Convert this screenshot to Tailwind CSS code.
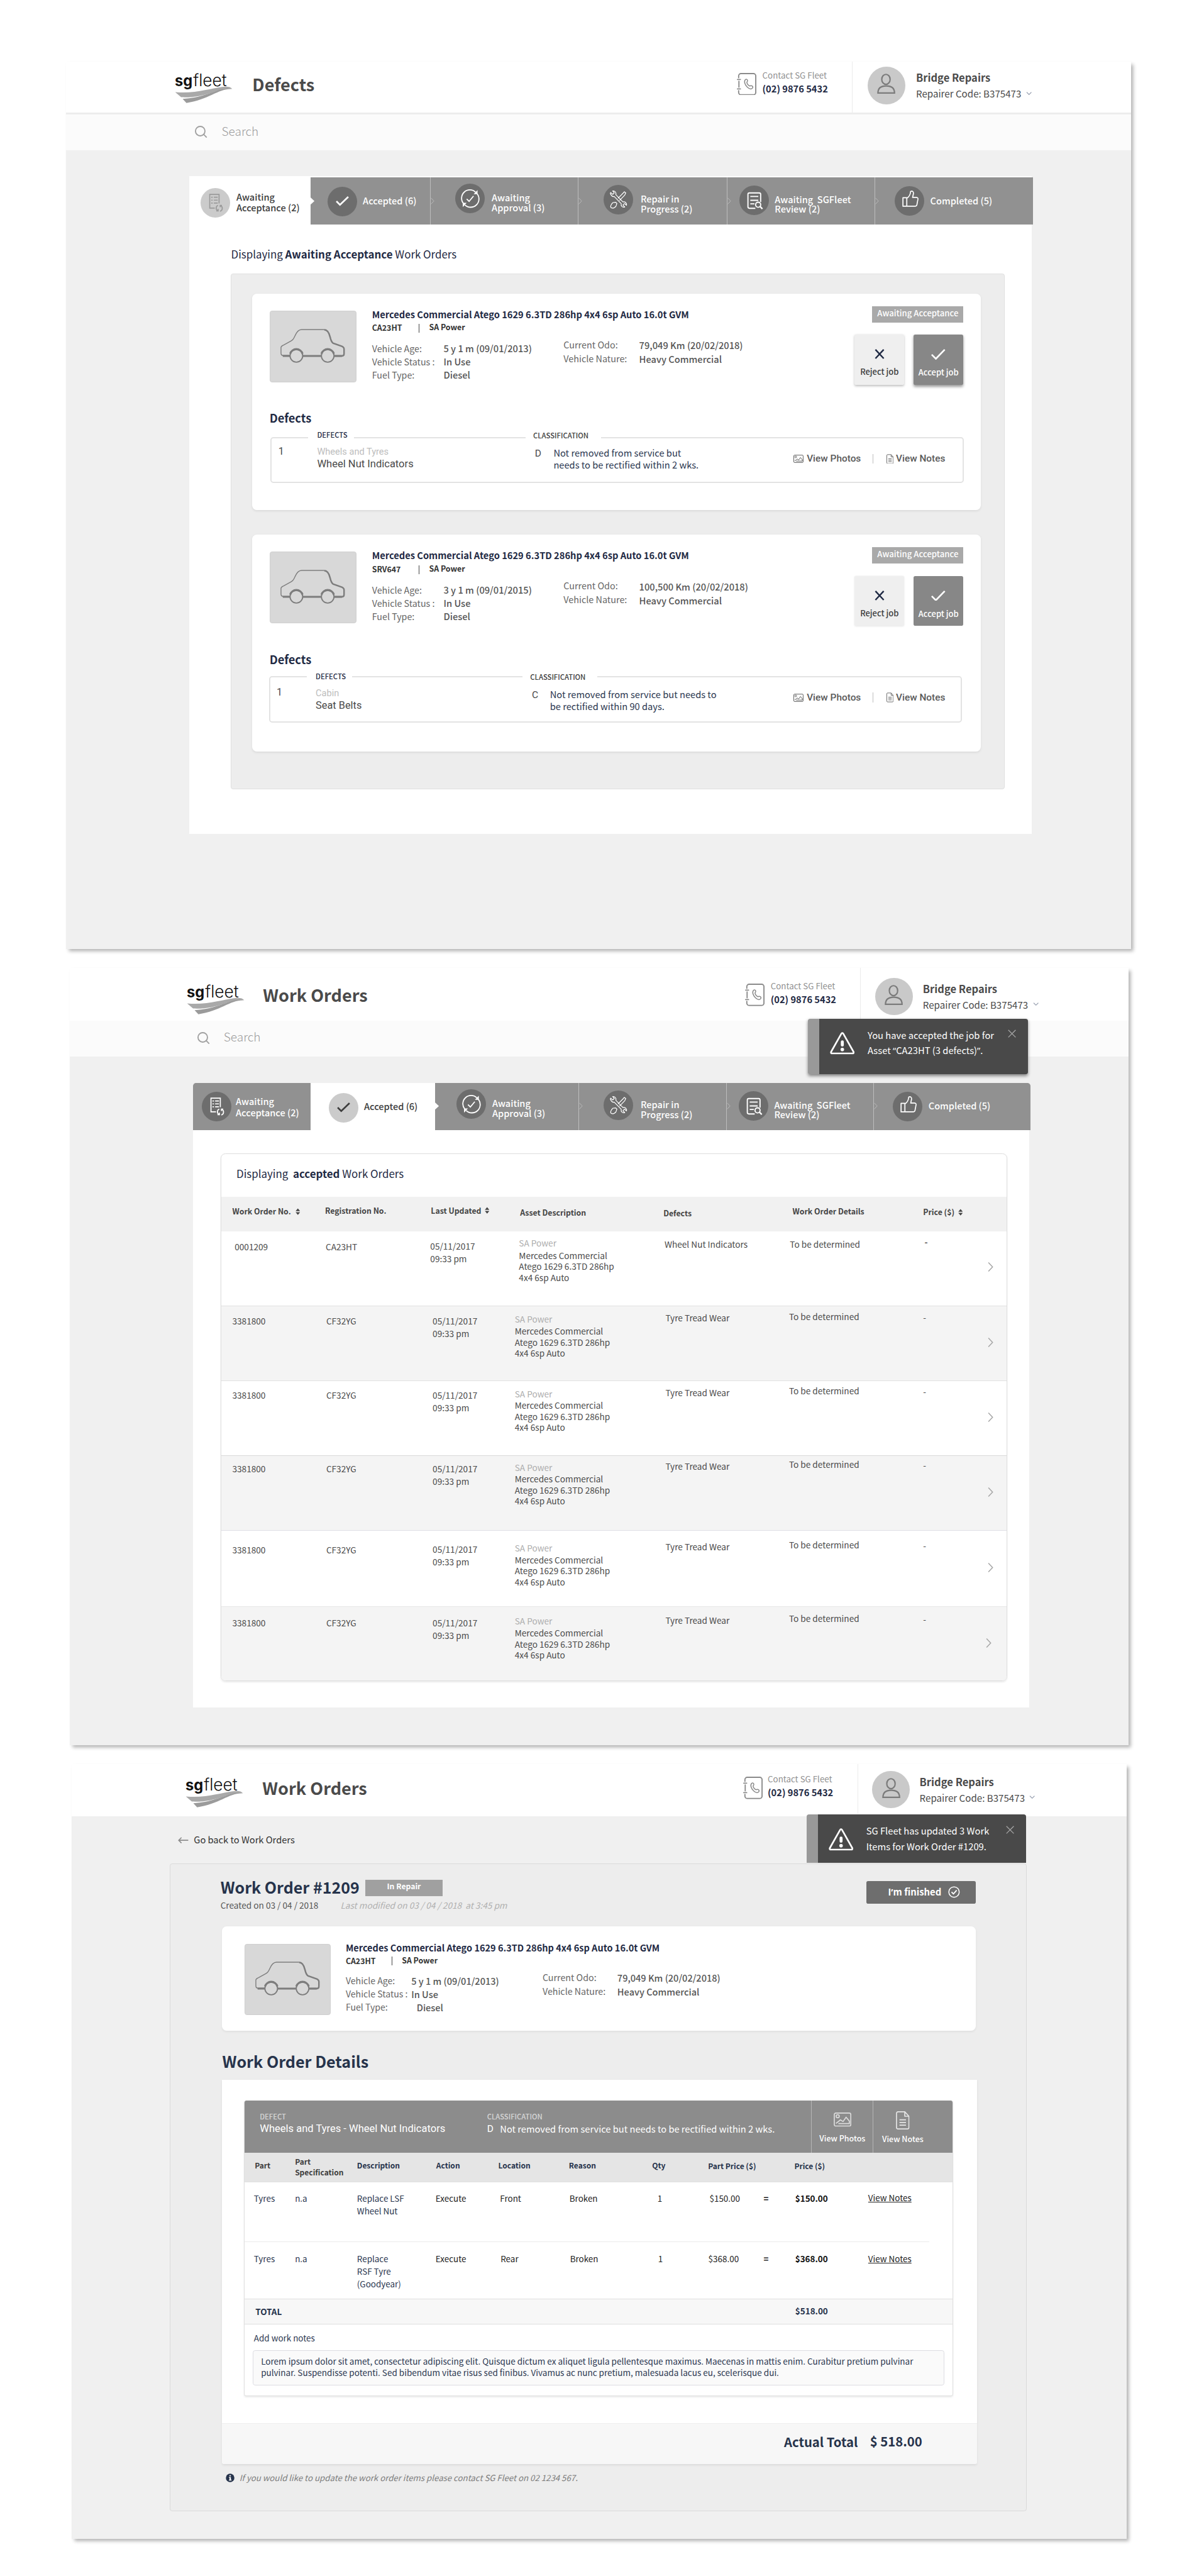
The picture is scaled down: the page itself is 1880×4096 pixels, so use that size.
<!DOCTYPE html>
<html lang="en">
<head>
<meta charset="utf-8">
<title>SG Fleet – Repairer Portal</title>
<script src="https://cdn.jsdelivr.net/npm/@tailwindcss/browser@4"></script>
</head>
<body class="bg-white w-[1880px] h-[4096px] overflow-hidden">

<!-- Shared icons -->
<svg class="hidden" xmlns="http://www.w3.org/2000/svg">
  <symbol id="i-logo-wave" viewBox="0 0 98 50">
    <path fill="#a9a9a9" d="M.7 31.3C34 34.5 60 25 80 22.6c8-1 14-.8 17.3 3.4C75 22 55 42 10.7 40Z"/>
    <path fill="#9b9b9b" d="M13.3 42.7C44 42 66 29 84 25.6c6-.8 10-.4 13.3.6C74 25 58 44 19.7 49.8Z"/>
  </symbol>
  <symbol id="i-phone" viewBox="0 0 34 38">
    <g fill="none" stroke="#8a8a8a" stroke-width="2" stroke-linecap="round">
      <path d="M3 8V5a4 4 0 0 1 4-4h21a4 4 0 0 1 4 4v28a4 4 0 0 1-4 4H7a4 4 0 0 1-4-4v-3"/>
      <path d="M1 11h5M1 27h5M3.500 14v10"/>
      <path stroke-width="1.600" d="M14.500 11.200c1.500-1.300 3-.4 3.500 1.300.5 1.800-.8 2.600-1.100 3.400.2 2.600 2.700 5.600 4.800 6.200 1.200-.3 2.500-1.300 4-.2 1.600 1.200 1.800 2.500.5 3.900-2.200 2.200-5.700.9-8.600-1.900-3.900-3.900-6.200-9.700-3.100-12.700Z"/>
    </g>
  </symbol>
  <symbol id="i-person" viewBox="0 0 32 36">
    <g fill="none" stroke="#7b7b7b" stroke-width="2.400"><ellipse cx="15.500" cy="10" rx="7.300" ry="8.700"/><path d="M1.500 33.800c0-9 5-12.300 14.500-12.300s14.500 3.300 14.500 12.300Z"/></g>
  </symbol>
  <symbol id="i-search" viewBox="0 0 21 21">
    <g fill="none" stroke="#a0a0a0" stroke-width="2"><circle cx="9" cy="9" r="8"/><path d="M14.800 14.500 20 19.800"/></g>
  </symbol>
  <symbol id="i-down" viewBox="0 0 10 6"><path fill="none" stroke="#8a93a5" stroke-width="1.200" d="m1 .6 4 4 4-4"/></symbol>
  <symbol id="i-doc-refresh" viewBox="0 0 50 50">
    <g fill="none" stroke="currentColor" stroke-width="1.800">
      <path d="M24 34h-8.500V10.800h15.800V26"/>
      <path d="M18 15.600h2.500M22.500 15.600h6.500M18 20.500h2.500M22.500 20.500h6.500M18 25.500h2.500M22.500 25.500h6.500"/>
      <path d="M29.500 29.300a5 5 0 0 0-.5 9M33 39.200a5 5 0 0 0 1-9.300M26.500 38.700h3.200v-3.200M36.200 29.300h-3v3.200"/>
    </g>
  </symbol>
  <symbol id="i-check" viewBox="0 0 50 50"><path fill="none" stroke="currentColor" stroke-width="2.800" d="m15 24.500 6 6L35 17"/></symbol>
  <symbol id="i-approve" viewBox="0 0 50 50">
    <g fill="none" stroke="currentColor" stroke-width="1.900">
      <path d="M14 33.500a14 14 0 0 1 20.500-19M37 17a14 14 0 0 1-20.500 19"/>
      <path d="m19.500 26 4 4L31 21"/>
    </g>
    <path fill="currentColor" d="M37.800 11v6.800h-6.600ZM12.800 39.500v-7h6.600Z"/>
  </symbol>
  <symbol id="i-tools" viewBox="0 0 50 50">
    <g fill="none" stroke="currentColor" stroke-width="1.300" stroke-linejoin="round">
      <path d="M12.500 16.500c-1.500-2-.8-3.200-.4-3.600l3.400 3 2.600-2.400-2.700-3.200c3-.6 6.500 2 5.400 6.300l12 12.300c3.300-1 6.800 1.700 6 5.600l-3.300-3-2.700 2.400 3 3.600c-3.500 1-7-1.700-5.900-5.700l-12-12.200c-2 .6-4 .1-5.400-3.100Z"/>
      <path d="m35 11.500 2.500 2-1.600 3.600-9 9.400M24.400 22.700l8.500-8.600L35 11.500M20.600 29.400l1.900 2-1.500 4.600c-1.500 2-4 3.300-6.200 3.300-2.500-.3-3.400-2-2.500-4.300.8-2 2.200-4 3.700-5.200Z"/>
    </g>
  </symbol>
  <symbol id="i-doc-search" viewBox="0 0 50 50">
    <g fill="none" stroke="currentColor" stroke-width="2">
      <path d="M27 38.500H17a2.500 2.500 0 0 1-2.500-2.500V15a2.500 2.500 0 0 1 2.500-2.500h16.500A2.500 2.500 0 0 1 36 15v13"/>
      <path d="M18.500 18.500H32M18.500 25H32M18.500 31h7"/><circle cx="31.800" cy="32.500" r="4.300"/><path stroke-width="2.400" d="m35 35.500 4 4"/>
    </g>
  </symbol>
  <symbol id="i-thumb" viewBox="0 0 50 50">
    <g fill="none" stroke="currentColor" stroke-width="1.800" stroke-linejoin="round">
      <path d="M14 19.500h6.500v14.500H14ZM20.500 20.500c4-2.500 6-6 6.500-11.500 2.500-1.700 5.200.2 4.800 3.500l-1.500 6.500h6.500c2 .2 2.800 1.500 2.600 3l-1.800 9.500c-.4 1.700-1.500 2.500-3.200 2.500H20.500"/>
    </g>
  </symbol>
  <symbol id="i-sep" viewBox="0 0 8 12"><path fill="none" stroke="#bdbdbd" stroke-width="1" d="m.5.8 5 5.200-5 5.200"/></symbol>
  <symbol id="i-arrow" viewBox="0 0 8 12"><path fill="#fff" d="M0 0l6.500 6L0 12Z"/></symbol>
  <symbol id="i-car" viewBox="0 0 110 58">
    <g fill="none" stroke="#7d7d7d">
      <path stroke-width="1.500" d="M15.500 45H4.500Q1 45 1 41V31.500Q1 29 5 27.500l13-7.200q4-2 6.500-8.300Q29 1 36 1h38"/>
      <path stroke-width="2.600" d="M74 1.400q7 0 10 12 2 8.500 5 10.600l15 5.500q3.500 1.500 3.700 4.500V42q0 3.700-4 3.700h-13"/>
      <path stroke-width="3.200" d="M38 45.700h31M4 45.700h12M91 45.700h13"/>
      <circle stroke-width="2" cx="27" cy="45.500" r="10.700"/><circle stroke-width="2" cx="80" cy="45.500" r="10.700"/>
      <path stroke-width="3.400" d="M16.500 42a11 11 0 0 1 21 0M69.500 42a11 11 0 0 1 21 0"/>
    </g>
  </symbol>
  <symbol id="i-photo" viewBox="0 0 30 24">
    <g fill="none" stroke="currentColor" stroke-width="1.800" stroke-linejoin="round">
      <rect x="1" y="1" width="28" height="22" rx="2.500"/><circle cx="6.800" cy="6.300" r="2.600"/>
      <path d="m3.800 18.500 7.600-6 4.500 2.800L21 8l5.500 6.500v4.300H8"/>
    </g>
  </symbol>
  <symbol id="i-note" viewBox="0 0 23 31">
    <g fill="none" stroke="currentColor" stroke-width="1.800" stroke-linejoin="round">
      <path d="M1 3.500A2.500 2.500 0 0 1 3.500 1H15l7 7.500v19a2.500 2.500 0 0 1-2.500 2.500h-16A2.500 2.500 0 0 1 1 27.500Z"/><path d="M15 1v7.500h7M6 14.500h11M6 19h11M6 23.500h11"/>
    </g>
  </symbol>
  <symbol id="i-sort" viewBox="0 0 8 12"><path fill="#444" d="M4 .5 7.800 5H.2ZM4 11.500.2 7h7.600Z"/></symbol>
  <symbol id="i-right" viewBox="0 0 10 18"><path fill="none" stroke="#a6a6a6" stroke-width="1.600" d="m1.200 1.500 7 7.500-7 7.500"/></symbol>
  <symbol id="i-warn" viewBox="0 0 42 38">
    <path fill="none" stroke="#fff" stroke-width="2.800" stroke-linejoin="round" d="M19.500 2.600q1.500-2 3 0L40 33.500q1 2.700-2 2.700H4q-3 0-2-2.700Z"/>
    <path stroke="#fff" stroke-width="5" stroke-linecap="round" d="M21 16.500v5.500"/><circle fill="#fff" cx="21" cy="29.500" r="3"/>
  </symbol>
  <symbol id="i-x" viewBox="0 0 14 14"><path fill="none" stroke="currentColor" stroke-width="1.300" d="m.8.8 12.400 12.400M13.200.8.8 13.200"/></symbol>
</svg>

<div class="[zoom:0.94] w-[2000px] h-[4358px] pt-[104px] overflow-hidden font-['Noto_Sans_CJK_SC','Open_Sans',sans-serif] text-[15px] leading-5 text-[#4a4a4a] whitespace-nowrap">

<!-- ============ Screen 1: Defects ============ -->
<section class="ml-[112px] w-[1802px] h-[1501px] bg-[#f0f0f0] shadow-[4px_4px_6px_rgba(0,0,0,0.3)]">
  <header class="h-[90px] bg-white border-b-4 border-[#ededed] flex items-start pl-[184px]">
    <svg class="mt-[20px] w-[98px] h-[50px] overflow-visible"><use href="#i-logo-wave"/><text x="0" y="21.500" textLength="30" lengthAdjust="spacingAndGlyphs" font-family="Inter" font-weight="700" font-size="26" fill="#111">sg</text><text x="31" y="21.500" textLength="57" lengthAdjust="spacingAndGlyphs" font-family="Inter" font-weight="300" font-size="28" fill="#111">fleet</text></svg>
    <h1 class="ml-[33px] mt-[18.500px] text-[28.800px] leading-10 font-bold text-[#4a4a4a]">Defects</h1>
    <div class="ml-auto w-[667px] flex items-start">
      <div class="w-[196px] h-[86px] border-r border-[#ebebeb] flex items-start">
        <svg class="mt-[19px] w-[34px] h-[38px]"><use href="#i-phone"/></svg>
        <div class="ml-[9px] mt-[14px]"><div class="text-[14.200px] text-[#8f8f8f]">Contact SG Fleet</div><div class="mt-[2px] text-[15.600px] font-bold text-[#1f2a44]">(02) 9876 5432</div></div>
      </div>
      <div class="ml-[25px] mt-[9px] size-[64px] rounded-full bg-[#c9c9c9] flex justify-center pt-[12px]"><svg class="w-[31px] h-[35px]"><use href="#i-person"/></svg></div>
      <div class="ml-[18px] mt-[17.500px]"><div class="text-[17.600px] font-bold">Bridge Repairs</div><div class="mt-[6.500px] flex items-center text-[16.100px]"><span class="w-[186px]">Repairer Code: B375473</span><svg class="w-[10px] h-[6px]"><use href="#i-down"/></svg></div></div>
    </div>
  </header>
  <div class="h-[60px] bg-[#fbfbfb] flex items-start pl-[218px]">
    <svg class="mt-[19px] w-[21px] h-[21px]"><use href="#i-search"/></svg>
    <span class="ml-[24px] mt-[17.500px] text-[20.300px] text-[#9b9b9b] font-light">Search</span>
  </div>

  <main class="ml-[208px] mt-[44px] w-[1426px] h-[1113px] bg-white pt-[2px]">
    <nav class="w-[1428px] h-[80px] flex bg-[#919191] text-white font-medium text-[15.500px]">
      <div class="w-[206px] bg-white text-[#3d3d3d] flex items-start pl-[19px]">
        <svg class="mt-[18px] size-[50px] rounded-full bg-[#cbcbcb] text-[#9a9a9a]"><use href="#i-doc-refresh"/></svg>
        <div class="ml-[11px] mt-[23px] leading-[19px]">Awaiting<br>Acceptance (2)</div>
      </div>
      <div class="relative w-[202px] flex items-start pl-[28px]">
        <svg class="absolute left-0 top-[34px] w-[8px] h-[12px]"><use href="#i-arrow"/></svg>
        <svg class="mt-[16.500px] size-[50px] rounded-full bg-[#6d6d6d]"><use href="#i-check"/></svg>
        <div class="ml-[10px] mt-[30px]">Accepted (6)</div>
      </div>
      <div class="relative w-[250px] border-l border-[#bdbdbd] flex items-start pl-[41px]">
        <svg class="absolute left-0 top-[34px] w-[8px] h-[12px]"><use href="#i-sep"/></svg>
        <svg class="mt-[11px] size-[50px] rounded-full bg-[#6d6d6d]"><use href="#i-approve"/></svg>
        <div class="ml-[12px] mt-[26px] leading-[16.500px]">Awaiting<br>Approval (3)</div>
      </div>
      <div class="relative w-[252px] border-l border-[#bdbdbd] flex items-start pl-[42px]">
        <svg class="absolute left-0 top-[34px] w-[8px] h-[12px]"><use href="#i-sep"/></svg>
        <svg class="mt-[12.500px] size-[50px] rounded-full bg-[#6d6d6d]"><use href="#i-tools"/></svg>
        <div class="ml-[13px] mt-[27.500px] leading-[17px]">Repair in<br>Progress (2)</div>
      </div>
      <div class="relative w-[250px] border-l border-[#bdbdbd] flex items-start pl-[20px]">
        <svg class="absolute left-0 top-[34px] w-[8px] h-[12px]"><use href="#i-sep"/></svg>
        <svg class="mt-[14px] size-[50px] rounded-full bg-[#6d6d6d]"><use href="#i-doc-search"/></svg>
        <div class="ml-[10px] mt-[28.500px] leading-[16.500px]">Awaiting&nbsp; SGFleet<br>Review (2)</div>
      </div>
      <div class="relative w-[268px] border-l border-[#bdbdbd] flex items-start pl-[33px]">
        <svg class="absolute left-0 top-[34px] w-[8px] h-[12px]"><use href="#i-sep"/></svg>
        <svg class="mt-[15px] size-[50px] rounded-full bg-[#6d6d6d]"><use href="#i-thumb"/></svg>
        <div class="ml-[10px] mt-[29.500px]">Completed (5)</div>
      </div>
    </nav>

    <h2 class="ml-[71px] mt-[36px] h-[28px] leading-7 text-[18px] text-[#1f2a44]">Displaying <b>Awaiting Acceptance</b> Work Orders</h2>

    <div class="ml-[70px] mt-[19px] w-[1310px] h-[872px] rounded-[4px] border border-[#dfdfdf] bg-[#ededed] pl-[35.500px] pt-[32.500px]">

      <!-- CA23HT -->
      <article class="w-[1233.500px] h-[366.500px] rounded-[8px] bg-white shadow-[0_2px_4px_rgba(0,0,0,0.08)] pl-[29.500px] pr-[30px] pt-[21.500px]">
        <div class="flex items-start h-[133px]">
          <div class="mt-[7.500px] w-[147px] h-[121px] rounded-[4px] bg-[#d8d8d8] border border-[#cfcfcf] pl-[17px] pt-[29.500px]"><svg class="w-[110px] h-[58px]"><use href="#i-car"/></svg></div>
          <div class="ml-[26.500px] mt-[4px]">
            <div class="font-bold text-[15.600px] text-[#1f2a44]">Mercedes Commercial Atego 1629 6.3TD 286hp 4x4 6sp Auto 16.0t GVM</div>
            <div class="mt-[3px] flex text-[13.200px] font-bold text-[#333]"><span class="w-[79px]">CA23HT</span><span class="mt-[3px] w-[17.500px] h-[15px] border-l border-[#444]"></span><span class="-mt-[1px]">SA Power</span></div>
            <div class="mt-[13px] flex items-start leading-[22.400px]">
              <div class="w-[121px] text-[15.200px] text-[#666]">Vehicle Age:<br>Vehicle Status :<br>Fuel Type:</div>
              <div class="w-[203px] text-[15.600px] font-medium text-[#555]">5 y 1 m (09/01/2013)<br>In Use<br>Diesel</div>
              <div class="-mt-[7px] w-[128px] text-[15.300px] leading-[23.600px] text-[#666]">Current Odo:<br>Vehicle Nature:</div>
              <div class="-mt-[5.500px] text-[15.600px] leading-[23.600px] font-medium text-[#555]">79,049 Km (20/02/2018)<br>Heavy Commercial</div>
            </div>
          </div>
          <div class="ml-auto flex flex-col items-end">
            <div class="w-[154px] h-[27.500px] bg-[#a9a9a9] text-white text-[14px] font-medium leading-[24px] text-center">Awaiting Acceptance</div>
            <div class="mt-[21px] flex gap-[16px] text-[13.800px] font-medium">
              <div class="w-[84px] h-[84.500px] rounded-[3px] bg-[#efefef] shadow-[0_2px_4px_rgba(0,0,0,0.25)] flex flex-col items-center text-[#3d3d3d]"><svg class="mt-[24px] w-[17px] h-[17px] text-[#1f2a44]" viewBox="0 0 17 17"><path fill="none" stroke="currentColor" stroke-width="2.600" d="m1.500 1 14 15M15.500 1l-14 15"/></svg><span class="mt-[12px]">Reject job</span></div>
              <div class="w-[84px] h-[84.500px] rounded-[3px] bg-[#878787] shadow-[0_3px_5px_rgba(0,0,0,0.4)] flex flex-col items-center text-white"><svg class="mt-[24px] w-[24px] h-[18px]" viewBox="0 0 24 18"><path fill="none" stroke="currentColor" stroke-width="2.800" d="m1 9.500 7 7L23 1"/></svg><span class="mt-[12px]">Accept job</span></div>
            </div>
          </div>
        </div>
        <h3 class="mt-[42px] h-[28px] leading-7 text-[19.400px] font-bold text-[#1f2a44]">Defects</h3>
        <div class="relative ml-[1px] mt-[18px] w-[1174px] h-[78px] rounded-[5px] border-[2.200px] border-[#e3e3e3] flex items-start">
          <span class="absolute left-[62px] -top-[13px] w-[78px] pl-[15.500px] bg-white text-[12px] leading-4 font-medium text-[#1f2a44]">DEFECTS</span>
          <span class="absolute left-[430px] -top-[12px] w-[128px] pl-[13px] bg-white text-[12px] leading-4 font-medium text-[#3d3d3d]">CLASSIFICATION</span>
          <span class="ml-[12px] mt-[13.500px] w-[65.500px] font-['Roboto'] text-[17px]">1</span>
          <div class="mt-[13.500px] w-[368.500px] font-['Roboto']"><div class="text-[15.500px] text-[#bdbdbd]">Wheels and Tyres</div><div class="mt-[1px] text-[17.600px]">Wheel Nut Indicators</div></div>
          <span class="mt-[16.500px] w-[31.500px] font-['Roboto'] text-[16.500px]">D</span>
          <p class="mt-[14.500px] w-[405.500px] text-[15.600px] leading-[20.300px] text-[#2b3750]">Not removed from service but<br>needs to be rectified within 2 wks.</p>
          <div class="mt-[25px] flex items-center font-['Roboto'] font-medium text-[16.400px] text-[#5a5a5a]"><svg class="w-[17px] h-[14px]"><use href="#i-photo"/></svg><span class="ml-[6px] w-[112px]">View Photos</span><span class="w-[23px] h-[17px] border-l border-[#bdbdbd]"></span><svg class="w-[12px] h-[17px]"><use href="#i-note"/></svg><span class="ml-[4px]">View Notes</span></div>
        </div>
      </article>

      <!-- SRV647 -->
      <article class="mt-[41.500px] w-[1233.500px] h-[366.500px] rounded-[8px] bg-white shadow-[0_2px_4px_rgba(0,0,0,0.08)] pl-[29.500px] pr-[30px] pt-[21.500px]">
        <div class="flex items-start h-[133px]">
          <div class="mt-[7.500px] w-[147px] h-[121px] rounded-[4px] bg-[#d8d8d8] border border-[#cfcfcf] pl-[17px] pt-[29.500px]"><svg class="w-[110px] h-[58px]"><use href="#i-car"/></svg></div>
          <div class="ml-[26.500px] mt-[4px]">
            <div class="font-bold text-[15.600px] text-[#1f2a44]">Mercedes Commercial Atego 1629 6.3TD 286hp 4x4 6sp Auto 16.0t GVM</div>
            <div class="mt-[3px] flex text-[13.200px] font-bold text-[#333]"><span class="w-[79px]">SRV647</span><span class="mt-[3px] w-[17.500px] h-[15px] border-l border-[#444]"></span><span class="-mt-[1px]">SA Power</span></div>
            <div class="mt-[13px] flex items-start leading-[22.400px]">
              <div class="w-[121px] text-[15.200px] text-[#666]">Vehicle Age:<br>Vehicle Status :<br>Fuel Type:</div>
              <div class="w-[203px] text-[15.600px] font-medium text-[#555]">3 y 1 m (09/01/2015)<br>In Use<br>Diesel</div>
              <div class="-mt-[7px] w-[128px] text-[15.300px] leading-[23.600px] text-[#666]">Current Odo:<br>Vehicle Nature:</div>
              <div class="-mt-[5.500px] text-[15.600px] leading-[23.600px] font-medium text-[#555]">100,500 Km (20/02/2018)<br>Heavy Commercial</div>
            </div>
          </div>
          <div class="ml-auto flex flex-col items-end">
            <div class="w-[154px] h-[27.500px] bg-[#a9a9a9] text-white text-[14px] font-medium leading-[24px] text-center">Awaiting Acceptance</div>
            <div class="mt-[21px] flex gap-[16px] text-[13.800px] font-medium">
              <div class="w-[84px] h-[84.500px] rounded-[3px] bg-[#efefef] shadow-[0_1px_3px_rgba(0,0,0,0.1)] flex flex-col items-center text-[#3d3d3d]"><svg class="mt-[24px] w-[17px] h-[17px] text-[#1f2a44]" viewBox="0 0 17 17"><path fill="none" stroke="currentColor" stroke-width="2.600" d="m1.500 1 14 15M15.500 1l-14 15"/></svg><span class="mt-[12px]">Reject job</span></div>
              <div class="w-[84px] h-[84.500px] rounded-[3px] bg-[#878787] flex flex-col items-center text-white"><svg class="mt-[24px] w-[24px] h-[18px]" viewBox="0 0 24 18"><path fill="none" stroke="currentColor" stroke-width="2.800" d="m1 9.500 7 7L23 1"/></svg><span class="mt-[12px]">Accept job</span></div>
            </div>
          </div>
        </div>
        <h3 class="mt-[42px] h-[28px] leading-7 text-[19.400px] font-bold text-[#1f2a44]">Defects</h3>
        <div class="relative -ml-[1px] mt-[15px] w-[1173px] h-[78px] rounded-[5px] border-[2.200px] border-[#e3e3e3] flex items-start">
          <span class="absolute left-[62px] -top-[10px] w-[77px] pl-[15px] bg-white text-[12px] leading-4 font-medium text-[#1f2a44]">DEFECTS</span>
          <span class="absolute left-[427px] -top-[9px] w-[127px] pl-[13px] bg-white text-[12px] leading-4 font-medium text-[#3d3d3d]">CLASSIFICATION</span>
          <span class="ml-[11px] mt-[15.500px] w-[66px] font-['Roboto'] text-[17px]">1</span>
          <div class="mt-[16.500px] w-[366px] font-['Roboto']"><div class="text-[15.500px] text-[#bdbdbd]">Cabin</div><div class="mt-[1px] text-[17.400px]">Seat Belts</div></div>
          <span class="mt-[19.500px] w-[30.500px] font-['Roboto'] text-[16.500px]">C</span>
          <p class="mt-[17.500px] w-[411.500px] text-[15.600px] leading-[20.300px] text-[#2b3750]">Not removed from service but needs to<br>be rectified within 90 days.</p>
          <div class="mt-[24px] flex items-center font-['Roboto'] font-medium text-[16.400px] text-[#5a5a5a]"><svg class="w-[17px] h-[14px]"><use href="#i-photo"/></svg><span class="ml-[6px] w-[112px]">View Photos</span><span class="w-[23px] h-[17px] border-l border-[#bdbdbd]"></span><svg class="w-[12px] h-[17px]"><use href="#i-note"/></svg><span class="ml-[4px]">View Notes</span></div>
        </div>
      </article>
    </div>
  </main>
</section>

<!-- ============ Screen 2: Accepted work orders ============ -->
<section class="relative ml-[118px] mt-[32px] w-[1791.500px] h-[1315px] bg-[#f0f0f0] shadow-[4px_4px_6px_rgba(0,0,0,0.3)]">
  <header class="h-[90px] bg-white flex items-start pl-[198px]">
    <svg class="mt-[28.500px] w-[98px] h-[50px] overflow-visible"><use href="#i-logo-wave"/><text x="0" y="21.500" textLength="30" lengthAdjust="spacingAndGlyphs" font-family="Inter" font-weight="700" font-size="26" fill="#111">sg</text><text x="31" y="21.500" textLength="57" lengthAdjust="spacingAndGlyphs" font-family="Inter" font-weight="300" font-size="28" fill="#111">fleet</text></svg>
    <h1 class="ml-[31px] mt-[25.500px] text-[28.800px] leading-10 font-bold text-[#4a4a4a]">Work Orders</h1>
    <div class="ml-auto w-[648.500px] flex items-start">
      <div class="w-[195px] h-[90px] border-r border-[#ebebeb] flex items-start">
        <svg class="mt-[27px] w-[34px] h-[38px]"><use href="#i-phone"/></svg>
        <div class="ml-[9px] mt-[21.500px]"><div class="text-[14.200px] text-[#8f8f8f]">Contact SG Fleet</div><div class="mt-[2px] text-[15.600px] font-bold text-[#1f2a44]">(02) 9876 5432</div></div>
      </div>
      <div class="ml-[25px] mt-[17px] size-[63.500px] rounded-full bg-[#c9c9c9] flex justify-center pt-[12px]"><svg class="w-[31px] h-[35px]"><use href="#i-person"/></svg></div>
      <div class="ml-[17px] mt-[26px]"><div class="text-[17.600px] font-bold">Bridge Repairs</div><div class="mt-[6px] flex items-center text-[16.100px]"><span class="w-[186px]">Repairer Code: B375473</span><svg class="w-[10px] h-[6px]"><use href="#i-down"/></svg></div></div>
    </div>
  </header>
  <div class="h-[60px] bg-[#fbfbfb] flex items-start pl-[216.500px]">
    <svg class="mt-[18.500px] w-[21px] h-[21px]"><use href="#i-search"/></svg>
    <span class="ml-[23px] mt-[17px] text-[20.300px] text-[#9b9b9b] font-light">Search</span>
  </div>

  <!-- Toast -->
  <aside class="absolute left-[1249px] top-[86px] w-[372px] h-[94.500px] rounded-[4px] bg-[#494949] border-l-[20px] border-[#999] shadow-[0_3px_6px_rgba(0,0,0,0.45)] flex items-start text-white pl-[18px] pr-[20px]">
    <svg class="mt-[23px] w-[42px] h-[38px]"><use href="#i-warn"/></svg>
    <p class="ml-[22px] mt-[15px] text-[15.700px] leading-[26px]">You have accepted the job for<br>Asset <span class="font-['Open_Sans'] leading-none">“</span>CA23HT (3 defects)<span class="font-['Open_Sans'] leading-none">”</span>.</p>
    <svg class="ml-auto mt-[18.500px] w-[14px] h-[14px] text-[#a8a8a8]"><use href="#i-x"/></svg>
  </aside>

  <main class="ml-[209px] mt-[45px] w-[1415px] h-[1056px] bg-white rounded-tl-[6px]">
    <nav class="w-[1417px] h-[79.500px] flex bg-[#919191] text-white font-medium text-[15.500px] rounded-t-[5px]">
      <div class="w-[199px] flex items-start pl-[15px]">
        <svg class="mt-[15px] size-[50px] rounded-full bg-[#6d6d6d]"><use href="#i-doc-refresh"/></svg>
        <div class="ml-[7px] mt-[21px] leading-[19.500px]">Awaiting<br>Acceptance (2)</div>
      </div>
      <div class="w-[210px] bg-white text-[#3d3d3d] flex items-start pl-[30px]">
        <svg class="mt-[16.500px] size-[50px] rounded-full bg-[#cbcbcb] text-[#3d3d3d]"><use href="#i-check"/></svg>
        <div class="ml-[10px] mt-[30px]">Accepted (6)</div>
      </div>
      <div class="relative w-[243px] flex items-start pl-[36px]">
        <svg class="absolute left-0 top-[33px] w-[8px] h-[12px]"><use href="#i-arrow"/></svg>
        <svg class="mt-[11px] size-[50px] rounded-full bg-[#6d6d6d]"><use href="#i-approve"/></svg>
        <div class="ml-[11px] mt-[26px] leading-[16.500px]">Awaiting<br>Approval (3)</div>
      </div>
      <div class="relative w-[250px] border-l border-[#bdbdbd] flex items-start pl-[41px]">
        <svg class="absolute left-0 top-[33px] w-[8px] h-[12px]"><use href="#i-sep"/></svg>
        <svg class="mt-[12.500px] size-[50px] rounded-full bg-[#6d6d6d]"><use href="#i-tools"/></svg>
        <div class="ml-[13px] mt-[27.500px] leading-[17px]">Repair in<br>Progress (2)</div>
      </div>
      <div class="relative w-[248.500px] border-l border-[#bdbdbd] flex items-start pl-[20px]">
        <svg class="absolute left-0 top-[33px] w-[8px] h-[12px]"><use href="#i-sep"/></svg>
        <svg class="mt-[14px] size-[50px] rounded-full bg-[#6d6d6d]"><use href="#i-doc-search"/></svg>
        <div class="ml-[10px] mt-[28.500px] leading-[16.500px]">Awaiting&nbsp; SGFleet<br>Review (2)</div>
      </div>
      <div class="relative w-[266.500px] border-l border-[#bdbdbd] flex items-start pl-[32.500px]">
        <svg class="absolute left-0 top-[33px] w-[8px] h-[12px]"><use href="#i-sep"/></svg>
        <svg class="mt-[15px] size-[50px] rounded-full bg-[#6d6d6d]"><use href="#i-thumb"/></svg>
        <div class="ml-[10px] mt-[29px]">Completed (5)</div>
      </div>
    </nav>

    <div class="ml-[46px] mt-[40px] w-[1331px] h-[892.500px] rounded-[8px] border border-[#dedede] shadow-[0_2px_3px_rgba(0,0,0,0.08)] overflow-hidden text-[14.500px]">
      <h2 class="h-[71.500px] pl-[26px] pt-[18.500px] leading-7 text-[18px] text-[#1f2a44]">Displaying&nbsp; <b>accepted</b> Work Orders</h2>
      <div class="h-[59.500px] bg-[#f1f1f1] flex items-start text-[13.100px] font-bold text-[#444]">
        <div class="ml-[19px] mt-[15.500px] w-[157px] flex items-center">Work Order No.<svg class="ml-[8px] w-[8px] h-[12px]"><use href="#i-sort"/></svg></div>
        <div class="mt-[14px] w-[179px]">Registration No.</div>
        <div class="mt-[14px] w-[151px] flex items-center">Last Updated<svg class="ml-[6px] w-[8px] h-[12px]"><use href="#i-sort"/></svg></div>
        <div class="mt-[18px] w-[242.500px]">Asset Description</div>
        <div class="mt-[19px] w-[218.500px]">Defects</div>
        <div class="mt-[15.500px] w-[221px]">Work Order Details</div>
        <div class="mt-[16.500px] flex items-center">Price ($)<svg class="ml-[6px] w-[8px] h-[12px]"><use href="#i-sort"/></svg></div>
      </div>
      <div class="h-[125px] bg-white flex items-start">
        <div class="ml-[23px] mt-[15px] w-[154px]">0001209</div>
        <div class="mt-[15px] w-[177px]">CA23HT</div>
        <div class="mt-[13px] w-[150px] leading-[21.300px]">05/11/2017<br>09:33 pm</div>
        <div class="mt-[9px] w-[246.500px]"><div class="text-[#adadad]">SA Power</div><p class="mt-[2px] leading-[18.700px]">Mercedes Commercial<br>Atego 1629 6.3TD 286hp<br>4x4 6sp Auto</p></div>
        <div class="mt-[11px] w-[212px]">Wheel Nut Indicators</div>
        <div class="mt-[11px] w-[228px]">To be determined</div>
        <div class="mt-[7px] w-[106.500px] font-bold">-</div>
        <svg class="mt-[50.500px] w-[10px] h-[18px]"><use href="#i-right"/></svg>
      </div>
      <div class="h-[126.400px] pt-[7px] border-t border-[#e2e2e2] bg-[#f4f4f4] flex items-start">
        <div class="ml-[19px] mt-[8px] w-[159px]">3381800</div><div class="mt-[8px] w-[180px]">CF32YG</div>
        <div class="mt-[6.500px] w-[139px] leading-[21.300px]">05/11/2017<br>09:33 pm</div>
        <div class="mt-[5px] w-[255px]"><div class="text-[#adadad]">SA Power</div><p class="mt-[1px] leading-[18.700px]">Mercedes Commercial<br>Atego 1629 6.3TD 286hp<br>4x4 6sp Auto</p></div>
        <div class="mt-[3px] w-[209px]">Tyre Tread Wear</div><div class="w-[227px]">To be determined</div><div class="mt-[1px] w-[109px]">-</div>
        <svg class="mt-[45px] w-[10px] h-[18px]"><use href="#i-right"/></svg>
      </div>
      <div class="h-[126.400px] pt-[6.500px] border-t border-[#e2e2e2] bg-white flex items-start">
        <div class="ml-[19px] mt-[8px] w-[159px]">3381800</div><div class="mt-[8px] w-[180px]">CF32YG</div>
        <div class="mt-[6.500px] w-[139px] leading-[21.300px]">05/11/2017<br>09:33 pm</div>
        <div class="mt-[5px] w-[255px]"><div class="text-[#adadad]">SA Power</div><p class="mt-[1px] leading-[18.700px]">Mercedes Commercial<br>Atego 1629 6.3TD 286hp<br>4x4 6sp Auto</p></div>
        <div class="mt-[3px] w-[209px]">Tyre Tread Wear</div><div class="w-[227px]">To be determined</div><div class="mt-[1px] w-[109px]">-</div>
        <svg class="mt-[45.500px] w-[10px] h-[18px]"><use href="#i-right"/></svg>
      </div>
      <div class="h-[127.500px] pt-[4.500px] border-t border-[#dadada] bg-[#f4f4f4] flex items-start">
        <div class="ml-[19px] mt-[8px] w-[159px]">3381800</div><div class="mt-[8px] w-[180px]">CF32YG</div>
        <div class="mt-[6.500px] w-[139px] leading-[21.300px]">05/11/2017<br>09:33 pm</div>
        <div class="mt-[5px] w-[255px]"><div class="text-[#adadad]">SA Power</div><p class="mt-[1px] leading-[18.700px]">Mercedes Commercial<br>Atego 1629 6.3TD 286hp<br>4x4 6sp Auto</p></div>
        <div class="mt-[3px] w-[209px]">Tyre Tread Wear</div><div class="w-[227px]">To be determined</div><div class="mt-[1px] w-[109px]">-</div>
        <svg class="mt-[48.500px] w-[10px] h-[18px]"><use href="#i-right"/></svg>
      </div>
      <div class="h-[128.600px] pt-[13.500px] border-t border-[#dfdfe6] bg-white flex items-start">
        <div class="ml-[19px] mt-[8px] w-[159px]">3381800</div><div class="mt-[8px] w-[180px]">CF32YG</div>
        <div class="mt-[6.500px] w-[139px] leading-[21.300px]">05/11/2017<br>09:33 pm</div>
        <div class="mt-[5px] w-[255px]"><div class="text-[#adadad]">SA Power</div><p class="mt-[1px] leading-[18.700px]">Mercedes Commercial<br>Atego 1629 6.3TD 286hp<br>4x4 6sp Auto</p></div>
        <div class="mt-[3px] w-[209px]">Tyre Tread Wear</div><div class="w-[227px]">To be determined</div><div class="mt-[1px] w-[109px]">-</div>
        <svg class="mt-[39.500px] w-[10px] h-[18px]"><use href="#i-right"/></svg>
      </div>
      <div class="h-[127px] pt-[9px] border-t border-[#e8e8e8] bg-[#f4f4f4] flex items-start">
        <div class="ml-[19px] mt-[8px] w-[159px]">3381800</div><div class="mt-[8px] w-[180px]">CF32YG</div>
        <div class="mt-[6.500px] w-[139px] leading-[21.300px]">05/11/2017<br>09:33 pm</div>
        <div class="mt-[5px] w-[255px]"><div class="text-[#adadad]">SA Power</div><p class="mt-[1px] leading-[18.700px]">Mercedes Commercial<br>Atego 1629 6.3TD 286hp<br>4x4 6sp Auto</p></div>
        <div class="mt-[3px] w-[209px]">Tyre Tread Wear</div><div class="w-[227px]">To be determined</div><div class="mt-[1px] w-[106px]">-</div>
        <svg class="mt-[43px] w-[10px] h-[18px]"><use href="#i-right"/></svg>
      </div>
    </div>
  </main>
</section>

<!-- ============ Screen 3: Work order #1209 ============ -->
<section class="relative ml-[121px] mt-[32px] w-[1785px] h-[1310.500px] bg-[#f0f0f0] shadow-[4px_4px_6px_rgba(0,0,0,0.3)]">
  <header class="h-[88px] bg-white flex items-start pl-[193px]">
    <svg class="mt-[23px] w-[98px] h-[50px] overflow-visible"><use href="#i-logo-wave"/><text x="0" y="21.500" textLength="30" lengthAdjust="spacingAndGlyphs" font-family="Inter" font-weight="700" font-size="26" fill="#111">sg</text><text x="31" y="21.500" textLength="57" lengthAdjust="spacingAndGlyphs" font-family="Inter" font-weight="300" font-size="28" fill="#111">fleet</text></svg>
    <h1 class="ml-[32px] mt-[20.500px] text-[28.800px] leading-10 font-bold text-[#4a4a4a]">Work Orders</h1>
    <div class="ml-auto w-[649px] flex items-start">
      <div class="w-[195px] h-[84px] border-r border-[#ebebeb] flex items-start">
        <svg class="mt-[21.500px] w-[34px] h-[38px]"><use href="#i-phone"/></svg>
        <div class="ml-[8px] mt-[16.500px]"><div class="text-[14.200px] text-[#8f8f8f]">Contact SG Fleet</div><div class="mt-[2px] text-[15.600px] font-bold text-[#1f2a44]">(02) 9876 5432</div></div>
      </div>
      <div class="ml-[24px] mt-[11.500px] size-[63.500px] rounded-full bg-[#c9c9c9] flex justify-center pt-[12px]"><svg class="w-[31px] h-[35px]"><use href="#i-person"/></svg></div>
      <div class="ml-[16.500px] mt-[20.500px]"><div class="text-[17.600px] font-bold">Bridge Repairs</div><div class="mt-[6px] flex items-center text-[16.100px]"><span class="w-[186px]">Repairer Code: B375473</span><svg class="w-[10px] h-[6px]"><use href="#i-down"/></svg></div></div>
    </div>
  </header>

  <!-- Toast -->
  <aside class="absolute left-[1244px] top-[85.500px] w-[371px] h-[82px] rounded-t-[4px] bg-[#494949] border-l-[20px] border-[#999] flex items-start text-white pl-[18.500px] pr-[20px]">
    <svg class="mt-[23px] w-[42px] h-[38px]"><use href="#i-warn"/></svg>
    <p class="ml-[21px] mt-[15px] text-[15.700px] leading-[26px]">SG Fleet has updated 3 Work<br>Items for Work Order #1209.</p>
    <svg class="ml-auto mt-[18.500px] w-[14px] h-[14px] text-[#a8a8a8]"><use href="#i-x"/></svg>
  </aside>

  <a class="h-[80px] flex items-start pl-[180px] pt-[30px] text-[#333] text-[15.600px]"><svg class="mt-[5px] w-[18px] h-[11px]" viewBox="0 0 18 11"><path fill="none" stroke="#8c8c8c" stroke-width="1.700" d="M17.500 5.500H1.500M6 .8 1.300 5.500 6 10.200"/></svg><span class="ml-[9px]">Go back to Work Orders</span></a>

  <main class="ml-[166.500px] w-[1450px] h-[1096px] rounded-[4px] border border-[#dadada] bg-[#ededed] pl-[86.500px]">
    <div class="h-[106px] w-[1276.500px] flex items-start">
      <div>
        <div class="flex items-start"><h2 class="-ml-[2px] mt-[19.500px] w-[245px] text-[26.600px] leading-10 font-bold text-[#26334b]">Work Order #1209</h2><span class="mt-[27px] w-[131px] h-[27px] bg-[#a0a0a0] text-center text-[13px] font-bold leading-[23px] text-white">In Repair</span></div>
        <div class="-ml-[2px] mt-[.5px] flex text-[14.500px]"><span class="w-[203px] text-[#555]">Created on 03 / 04 / 2018</span><span class="italic text-[#b0b0b0]">Last modified on 03 / 04 / 2018&nbsp; at 3:45 pm</span></div>
      </div>
      <button class="ml-auto mt-[28.500px] w-[186px] h-[39px] rounded-[3px] bg-[#6e6e6e] text-white font-bold text-[15.800px] flex items-center pl-[37px] pb-[1px]"><span class="w-[102px] text-left">I<span class="font-['Open_Sans'] leading-none">’</span>m finished</span><svg class="w-[20px] h-[20px]" viewBox="0 0 20 20"><g fill="none" stroke="#fff" stroke-width="1.600"><circle cx="10" cy="10" r="8.800"/><path stroke-width="2" d="m5.800 10 3.200 3.200L14.500 7"/></g></svg></button>
    </div>

    <article class="w-[1276px] h-[176px] rounded-[8px] bg-white shadow-[0_2px_4px_rgba(0,0,0,0.06)] flex items-start pl-[38.500px] pt-[26px]">
      <div class="mt-[3px] w-[146px] h-[120px] rounded-[4px] bg-[#d8d8d8] border border-[#cfcfcf] pl-[17px] pt-[29px]"><svg class="w-[110px] h-[58px]"><use href="#i-car"/></svg></div>
      <div class="ml-[25.500px]">
        <div class="font-bold text-[15.450px] text-[#1f2a44]">Mercedes Commercial Atego 1629 6.3TD 286hp 4x4 6sp Auto 16.0t GVM</div>
        <div class="mt-[2px] flex text-[13.100px] font-bold text-[#333]"><span class="w-[78px]">CA23HT</span><span class="mt-[3px] w-[17px] h-[15px] border-l border-[#444]"></span><span class="-mt-[1px]">SA Power</span></div>
        <div class="mt-[12.500px] flex items-start leading-[22.400px]">
          <div class="w-[111px] text-[15px] text-[#666]">Vehicle Age:<br>Vehicle Status :<br>Fuel Type:</div>
          <div class="w-[222px] text-[15.500px] font-medium text-[#555]">5 y 1 m (09/01/2013)<br>In Use<br><span class="ml-[9px]">Diesel</span></div>
          <div class="-mt-[6.500px] w-[126.500px] text-[15.200px] leading-[23.600px] text-[#666]">Current Odo:<br>Vehicle Nature:</div>
          <div class="-mt-[5.500px] text-[15.500px] leading-[23.600px] font-medium text-[#555]">79,049 Km (20/02/2018)<br>Heavy Commercial</div>
        </div>
      </div>
    </article>

    <h2 class="ml-[1px] mt-[32px] h-[40px] text-[26.700px] leading-10 font-bold text-[#26334b]">Work Order Details</h2>

    <article class="mt-[11.500px] w-[1278px] h-[649.500px] rounded-b-[4px] bg-white shadow-[0_2px_4px_rgba(0,0,0,0.08)] pt-[34.500px] flex flex-col">
      <div class="ml-[38px] w-[1200px] h-[500.500px] rounded-[4px] border border-[#e0e0e0] border-t-0 shadow-[0_2px_3px_rgba(0,0,0,0.08)] overflow-hidden text-[14.300px]">
        <div class="h-[88px] bg-[#8c8c8c] text-white flex items-stretch">
          <div class="ml-[25.500px] w-[384.500px] pt-[18px]"><div class="text-[12px] leading-[18px] text-[#d6d6d6] font-medium">DEFECT</div><div class="mt-[2.500px] font-['Roboto'] text-[17.600px]">Wheels and Tyres - Wheel Nut Indicators</div></div>
          <div class="w-[548.500px] pt-[18px]"><div class="text-[12px] leading-[18px] text-[#d6d6d6] font-medium">CLASSIFICATION</div><div class="mt-[3px] flex"><span class="w-[22px] font-['Roboto'] text-[16.500px]">D</span><span class="-mt-[1px] text-[15.600px]">Not removed from service but needs to be rectified within 2 wks.</span></div></div>
          <div class="w-[104.500px] border-l border-[#b5b5b5] flex flex-col items-center text-[13.300px] font-medium"><svg class="mt-[20.500px] w-[30px] h-[24px] text-[#dcdcdc]"><use href="#i-photo"/></svg><span class="mt-[10px]">View Photos</span></div>
          <div class="w-[100px] border-l border-[#b5b5b5] flex flex-col items-center text-[13.300px] font-medium"><svg class="mt-[18px] w-[23px] h-[31px] text-[#e5e5e5]"><use href="#i-note"/></svg><span class="mt-[7px]">View Notes</span></div>
        </div>
        <div class="h-[50.500px] bg-[#e5e5e5] border-b border-[#e0e0e0] flex items-start text-[12.800px] font-bold text-[#26334b]">
          <span class="ml-[17px] mt-[12px] w-[68px] text-[#3d3d3d]">Part</span>
          <span class="mt-[7px] w-[105px] leading-[17.500px] text-[#3d3d3d]">Part<br>Specification</span>
          <span class="mt-[12px] w-[134px]">Description</span><span class="mt-[12px] w-[105px]">Action</span><span class="mt-[12px] w-[119.500px]">Location</span><span class="mt-[12px] w-[141px]">Reason</span><span class="mt-[12px] w-[94.500px]">Qty</span><span class="mt-[13px] w-[146px]">Part Price ($)</span><span class="mt-[13px]">Price ($)</span>
        </div>
        <div class="h-[101px] w-[1158px] border-b border-[#ebebeb] flex items-start pt-[16px] leading-[21.300px] text-[#222]">
          <span class="ml-[15.500px] w-[69.500px] text-[#2b3750]">Tyres</span><span class="w-[105px] text-[#2b3750]">n.a</span><span class="w-[133px] text-[#2b3750]">Replace LSF<br>Wheel Nut</span><span class="w-[109px]">Execute</span><span class="w-[117.500px]">Front</span><span class="w-[149px]">Broken</span><span class="w-[88px]">1</span><span class="w-[91.500px]">$150.00</span><span class="w-[53.500px] font-bold">=</span><span class="w-[123.500px] font-bold text-[#111]">$150.00</span><span class="-mt-[1px] underline">View Notes</span>
        </div>
        <div class="h-[96px] flex items-start pt-[17px] leading-[21.300px] text-[#222]">
          <span class="ml-[15.500px] w-[69.500px] text-[#2b3750]">Tyres</span><span class="w-[105px] text-[#2b3750]">n.a</span><span class="w-[133px] text-[#2b3750]">Replace<br>RSF Tyre<br>(Goodyear)</span><span class="w-[110px]">Execute</span><span class="w-[117.500px]">Rear</span><span class="w-[149px]">Broken</span><span class="w-[85px]">1</span><span class="w-[93.500px]">$368.00</span><span class="w-[53.500px] font-bold">=</span><span class="w-[123.500px] font-bold text-[#111]">$368.00</span><span class="underline">View Notes</span>
        </div>
        <div class="h-[43.500px] bg-[#f7f7f7] border-y border-[#dedede] flex items-start pt-[10px] font-bold text-[#26334b]"><span class="ml-[18px] w-[913.500px]">TOTAL</span><span class="-mt-[.5px]">$518.00</span></div>
        <div class="ml-[15.500px] mt-[12.500px] text-[#2b3750]">Add work notes</div>
        <p class="ml-[13.500px] mt-[11px] w-[1170px] h-[60px] rounded-[4px] border border-[#dcdce2] bg-[#fafafa] pl-[13px] pt-[9px] text-[14.400px] leading-[18.700px] text-[#2b3750]">Lorem ipsum dolor sit amet, consectetur adipiscing elit. Quisque dictum ex aliquet ligula pellentesque maximus. Maecenas in mattis enim. Curabitur pretium pulvinar<br>pulvinar. Suspendisse potenti. Sed bibendum vitae risus sed finibus. Vivamus ac nunc pretium, malesuada lacus eu, scelerisque dui.</p>
      </div>
      <div class="mt-auto h-[69.500px] bg-[#f7f7f7] border-t border-[#eee] rounded-b-[4px] flex items-start pl-[951.500px] pt-[15.500px] text-[21.600px] leading-[30px] font-bold text-[#26334b]"><span class="w-[145.500px]">Actual Total</span><span class="-mt-[1px]">$ 518.00</span></div>
    </article>

    <div class="mt-[14px] ml-[7px] flex items-center text-[14.100px] italic text-[#7d7d7d]"><svg class="w-[15px] h-[15px]" viewBox="0 0 15 15"><circle cx="7.500" cy="7.500" r="7.200" fill="#26334b"/><path fill="#fff" d="M6.300 2.800h2.400v2H6.300ZM5.500 6h3.300v4.500h1v1.500H5.500v-1.500h.9v-3h-.9Z"/></svg><span class="ml-[8px]">If you would like to update the work order items please contact SG Fleet on 02 1234 567.</span></div>
  </main>
</section>

</div>
</body>
</html>
